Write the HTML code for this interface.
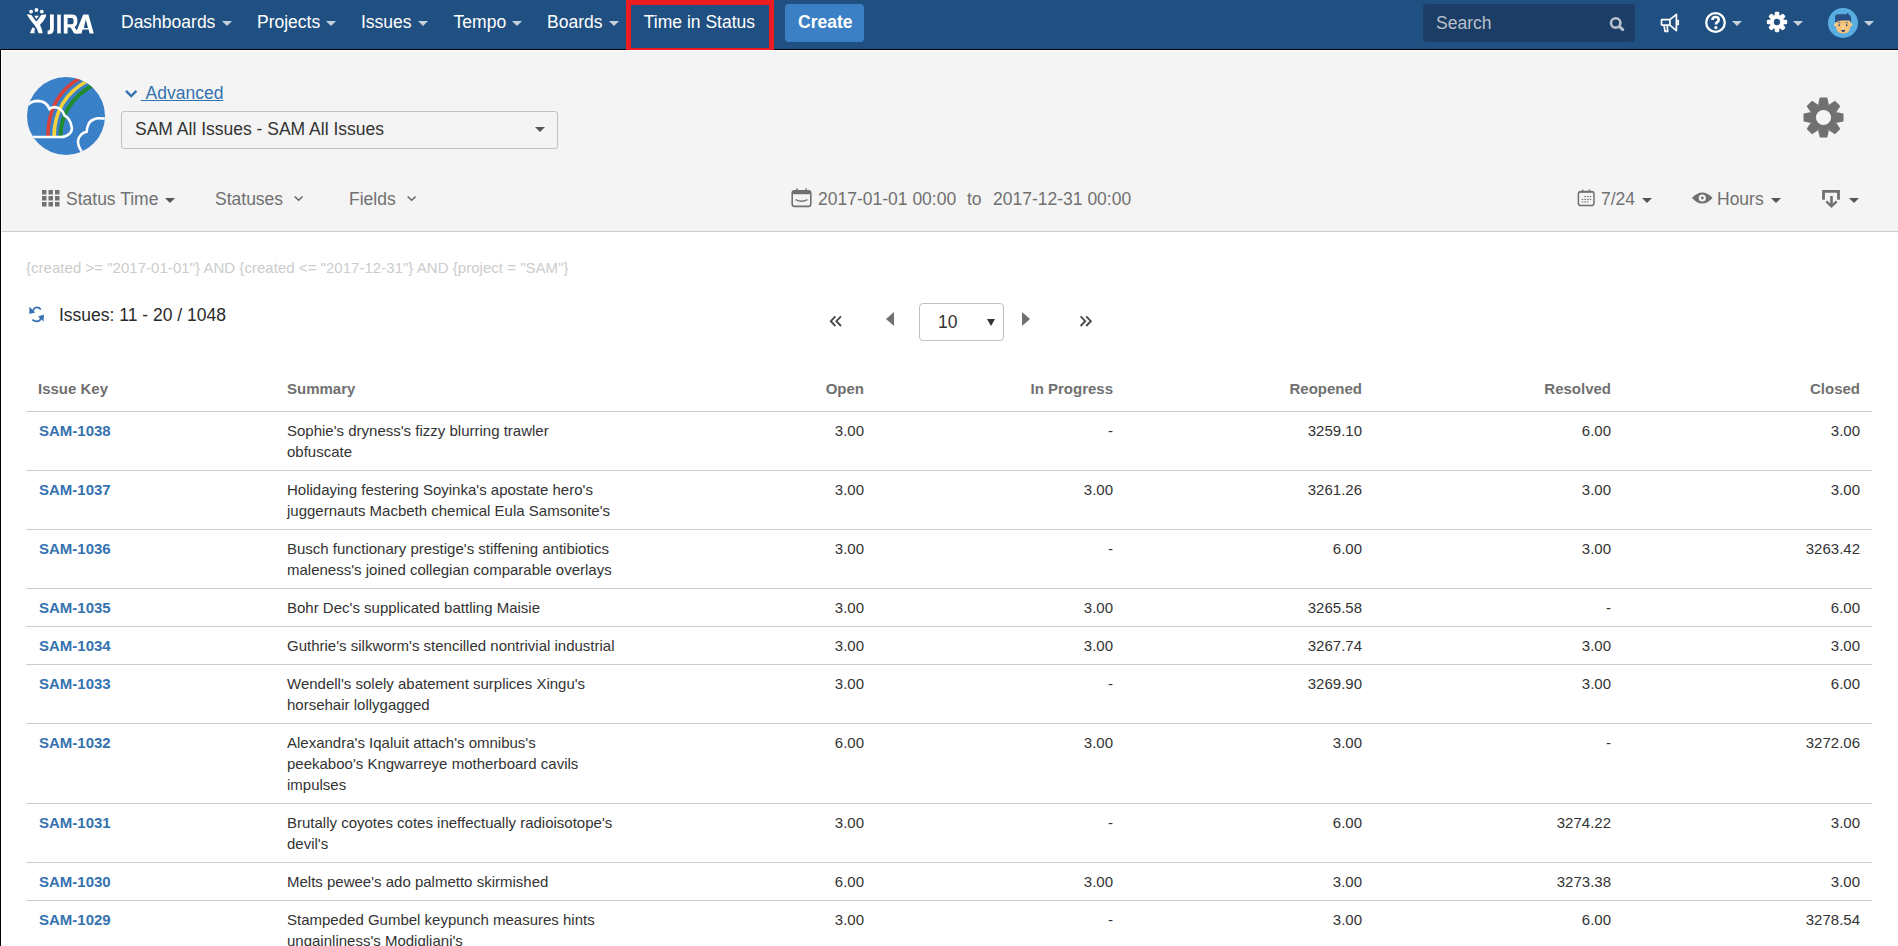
<!DOCTYPE html>
<html><head><meta charset="utf-8">
<style>
*{margin:0;padding:0;box-sizing:border-box}
html,body{width:1898px;height:946px;overflow:hidden;background:#fff;font-family:"Liberation Sans",sans-serif;}
.abs{position:absolute;white-space:nowrap}
#nav{position:absolute;left:0;top:0;width:1898px;height:49px;background:#205081}
#navline{position:absolute;left:0;top:49px;width:1898px;height:1px;background:#000}
#lborder{position:absolute;left:0;top:49px;width:1px;height:897px;background:#000}
.nt{position:absolute;top:12px;font-size:17.5px;line-height:20px;color:#fff;white-space:nowrap}
.ntri{position:absolute;top:21px;width:0;height:0;border-left:5px solid transparent;border-right:5px solid transparent;border-top:5px solid #c7d0db}
#hdr{position:absolute;left:1px;top:50px;width:1897px;height:182px;background:#f4f4f4;border-top:1px solid #fff;border-left:1px solid #fff;border-bottom:1px solid #ccc}
.gt{position:absolute;font-size:17.5px;line-height:20px;color:#707070;white-space:nowrap}
.gtri{position:absolute;width:0;height:0;border-left:5px solid transparent;border-right:5px solid transparent;border-top:5px solid #555}
table{position:absolute;left:26px;top:0;border-collapse:collapse;table-layout:fixed;width:1846px}

#tbl{position:absolute;left:26px;top:370px;border-collapse:collapse;table-layout:fixed;width:1846px;font-size:15px;line-height:21px;color:#333}
#tbl th{font-weight:bold;color:#707070;text-align:right;padding:8px 12px 12px 12px;height:41px;vertical-align:top;border-bottom:1px solid #ccc;white-space:nowrap}
#tbl th.l{text-align:left}
#tbl td{padding:8px 12px 8px 12px;vertical-align:top;border-bottom:1px solid #ccc;text-align:right;white-space:nowrap}
#tbl td.k{text-align:left;padding-left:13px;font-weight:bold;color:#3572b0}
#tbl td.s{text-align:left}
</style></head><body>
<div id="nav"></div>
<div id="navline"></div>
<div id="lborder"></div>

<!-- JIRA logo -->
<svg class="abs" style="left:24px;top:4px" width="76" height="36" viewBox="0 0 76 36">
  <g fill="#fff">
    <circle cx="7.1" cy="7.6" r="1.9"/><circle cx="12.4" cy="6" r="1.9"/><circle cx="17.8" cy="7.6" r="1.9"/>
    <path d="M10.2,11.8 H14.9 L12.4,15 Z"/>
    <path d="M2.9,10.8 Q3.4,10.1 5.2,10.4 L7.6,11.2 Q10,15 12.4,17.6 Q14.8,15 17.1,10.9 L21.6,10.2 Q22.4,10.6 22,12.4 Q19.6,17.6 16,20.8 Q17.8,24.4 18.7,29.2 H14.6 Q13.2,24.4 10.6,21.2 Q6.4,16.6 2.9,10.8 Z"/>
    <path d="M6,29.2 Q7,25.8 8.7,23.2 L10.9,24.6 Q10.4,26.8 10.5,29.2 Z"/>
    <path d="M26,10.6 H29.8 V25 Q29.8,30.2 25,30.2 H23.6 V26.4 H24.6 Q26,26.4 26,25 Z"/>
    <rect x="33.2" y="10.6" width="3.6" height="18.8"/>
    <path d="M39.8,10.6 H48.5 Q53.4,10.6 53.4,17 Q53.4,21.5 50.5,23 L54.8,29.4 H50.2 L46.6,23.6 H43.6 V29.4 H39.8 Z M43.6,14 V20.2 H48 Q49.6,20.2 49.6,17 Q49.6,14 48,14 Z" fill-rule="evenodd"/>
    <path d="M51.6,29.4 L59.2,10.6 H64.4 L69.8,29.4 H65.6 L64.6,25.6 H58.6 L57.6,29.4 Z M61.8,15.5 L59.8,24 H64 Z" fill-rule="evenodd"/>
  </g>
</svg>

<!-- nav items -->
<div class="nt" style="left:121px">Dashboards</div><div class="ntri" style="left:222px"></div>
<div class="nt" style="left:257px">Projects</div><div class="ntri" style="left:326px"></div>
<div class="nt" style="left:361px">Issues</div><div class="ntri" style="left:418px"></div>
<div class="nt" style="left:453.6px">Tempo</div><div class="ntri" style="left:512px"></div>
<div class="nt" style="left:547px">Boards</div><div class="ntri" style="left:609px"></div>
<div class="nt" style="left:643.8px">Time in Status</div>
<div class="abs" style="left:626px;top:0;width:148px;height:53px;border:5px solid #ed1c24;box-sizing:border-box"></div>
<div class="abs" style="left:785px;top:4px;width:79px;height:38px;background:#3b7fc4;border-radius:4px"></div>
<div class="nt" style="left:798px;font-weight:bold">Create</div>

<!-- search -->
<div class="abs" style="left:1423px;top:4px;width:212px;height:38px;background:#1c3d66;border-radius:4px"></div>
<div class="nt" style="left:1436px;top:13px;color:#b9c1cc">Search</div>
<svg class="abs" style="left:1608px;top:15px" width="18" height="18" viewBox="0 0 18 18">
  <circle cx="7.7" cy="7.9" r="4.7" fill="none" stroke="#b9c1cc" stroke-width="2.6"/>
  <path d="M11.2,11.4 L14.8,14.6" stroke="#b9c1cc" stroke-width="3" stroke-linecap="round"/>
</svg>

<!-- megaphone -->
<svg class="abs" style="left:1655px;top:8px" width="30" height="30" viewBox="0 0 30 30">
  <g fill="none" stroke="#fff" stroke-width="1.7" stroke-linejoin="round">
    <rect x="6.5" y="11.6" width="8.4" height="5.6" rx="0.6"/>
    <path d="M14.9,11.6 L21.4,6.4 V22.6 L14.9,17.2"/>
    <path d="M9,17.2 L10,23.4 H12.7 L12.2,17.2"/>
    <path d="M21.6,12.6 H23.2 V16.4 H21.6"/>
  </g>
</svg>
<!-- help -->
<svg class="abs" style="left:1703px;top:10px" width="26" height="26" viewBox="0 0 26 26">
  <circle cx="12.5" cy="12.5" r="9.3" fill="none" stroke="#fff" stroke-width="2.3"/>
  <path d="M9.4,10 Q9.6,7 12.6,7 Q15.7,7 15.7,9.7 Q15.7,11.4 14,12.4 Q12.9,13.1 12.9,14.6" fill="none" stroke="#fff" stroke-width="2.6"/>
  <circle cx="12.9" cy="17.6" r="1.6" fill="#fff"/>
</svg>
<div class="ntri" style="left:1732px"></div>
<!-- gear -->
<svg class="abs" style="left:1764.5px;top:10.3px" width="24" height="24" viewBox="-12 -12 24 24">
  <g fill="#fff">
    <circle r="7.2"/>
    <g id="teeth"><rect x="-2.3" y="-10.2" width="4.6" height="5" rx="1.4"/></g>
    <use href="#teeth" transform="rotate(45)"/><use href="#teeth" transform="rotate(90)"/><use href="#teeth" transform="rotate(135)"/>
    <use href="#teeth" transform="rotate(180)"/><use href="#teeth" transform="rotate(225)"/><use href="#teeth" transform="rotate(270)"/><use href="#teeth" transform="rotate(315)"/>
  </g>
  <circle r="3.2" fill="#205081"/>
</svg>
<div class="ntri" style="left:1793px"></div>
<!-- avatar -->
<svg class="abs" style="left:1828px;top:8px" width="30" height="30" viewBox="0 0 30 30">
  <circle cx="15" cy="15" r="15" fill="#5aade0"/>
  <ellipse cx="7.4" cy="16.8" rx="1.3" ry="1.7" fill="#f7cf8e"/>
  <ellipse cx="23" cy="16.8" rx="1.3" ry="1.7" fill="#f7cf8e"/>
  <path d="M8,11.5 V18 Q8,25.4 15.2,25.4 Q22.4,25.4 22.4,18 V11.5 Z" fill="#f5c47a"/>
  <path d="M7.1,14.2 V9.4 Q7.1,6.3 10.4,6.3 H18.2 L20.2,4.4 L20.6,6.5 Q23.1,7.3 23.1,10 V14.2 L21.6,12.4 H12.4 L11.6,13.2 L10.9,12.5 L10,13.4 Z" fill="#294e83"/>
  <ellipse cx="15.2" cy="18.8" rx="1" ry="1.8" fill="#f8d9a6"/>
  <ellipse cx="11.3" cy="17.2" rx="0.8" ry="1" fill="#294e83"/>
  <ellipse cx="18.7" cy="17.2" rx="0.8" ry="1" fill="#294e83"/>
  <path d="M10.2,14.7 H12.4 M17.6,14.7 H19.8" stroke="#294e83" stroke-width="0.8"/>
  <path d="M13.1,22 H17.2 Q16.8,24.1 15.15,24.1 Q13.5,24.1 13.1,22 Z" fill="#1a3d73"/>
</svg>
<div class="ntri" style="left:1864px"></div>

<!-- header panel -->
<div id="hdr"></div>
<svg class="abs" style="left:26px;top:76px" width="80" height="80" viewBox="0 0 80 80">
  <defs><clipPath id="pc"><circle cx="40" cy="40" r="39"/></clipPath></defs>
  <circle cx="40" cy="40" r="39" fill="#3a80c8"/>
  <g clip-path="url(#pc)" fill="none">
    <path d="M21.8,61 Q22,19 56,1" stroke="#d9423a" stroke-width="3.6"/>
    <path d="M28,61 Q28.4,23 61,5" stroke="#f5d23c" stroke-width="3.6"/>
    <path d="M34.4,61 Q35,28 66,9.5" stroke="#1f8b2f" stroke-width="3.8"/>
    <path d="M-2,61 H34 C42,61 47.5,56 45.4,50 C44.5,44 41,40.5 38.7,39.7 C37,35 33,31 28.3,31.1 C26,31.2 24.5,32 23.5,33 C21.5,28 17,25 12.1,24.9 C7,25 3.5,26.5 0,30.5" stroke="#fff" stroke-width="2.6"/>
    <path d="M82,42.5 H76 C70,41.6 64,44 62.5,48.3 C61,51 60.8,54 60.6,55.8 C57,56.5 52.5,59.5 52,65 C51.8,69 53.5,72.5 56,76" stroke="#fff" stroke-width="2.6"/>
  </g>
</svg>
<svg class="abs" style="left:124px;top:88px" width="15" height="11" viewBox="0 0 15 11">
  <path d="M2,2.9 L7.2,8 L12.4,2.9" fill="none" stroke="#3572b0" stroke-width="2.4"/>
</svg>
<div class="abs" style="left:140.7px;top:83px;font-size:17.5px;line-height:20px;color:#3572b0;text-decoration:underline">&nbsp;Advanced</div>
<div class="abs" style="left:121px;top:111px;width:437px;height:38px;border:1px solid #c1c1c1;border-radius:3px;background:#f4f4f4"></div>
<div class="abs" style="left:135px;top:119px;font-size:17.5px;line-height:20px;color:#333">SAM All Issues - SAM All Issues</div>
<div class="gtri" style="left:535px;top:127px;border-top-color:#555"></div>
<!-- big gear -->
<svg class="abs" style="left:1801px;top:95px" width="45" height="45" viewBox="-22.5 -22.5 45 45">
  <g fill="#707070">
    <circle r="13.2"/>
    <g id="bt"><path d="M-5.4,-12.4 L-3.9,-19.6 Q-3.8,-20 -3.4,-20 H3.4 Q3.8,-20 3.9,-19.6 L5.4,-12.4 Z"/></g>
    <use href="#bt" transform="rotate(45)"/><use href="#bt" transform="rotate(90)"/><use href="#bt" transform="rotate(135)"/>
    <use href="#bt" transform="rotate(180)"/><use href="#bt" transform="rotate(225)"/><use href="#bt" transform="rotate(270)"/><use href="#bt" transform="rotate(315)"/>
  </g>
  <circle r="7.6" fill="#f4f4f4"/>
</svg>

<!-- toolbar -->
<svg class="abs" style="left:42px;top:190px" width="18" height="17" viewBox="0 0 18 17">
  <g fill="#707070">
    <rect x="0" y="0" width="4.5" height="4.5"/><rect x="6.5" y="0" width="4.5" height="4.5"/><rect x="13" y="0" width="4.5" height="4.5"/>
    <rect x="0" y="6" width="4.5" height="4.5"/><rect x="6.5" y="6" width="4.5" height="4.5"/><rect x="13" y="6" width="4.5" height="4.5"/>
    <rect x="0" y="12" width="4.5" height="4.5"/><rect x="6.5" y="12" width="4.5" height="4.5"/><rect x="13" y="12" width="4.5" height="4.5"/>
  </g>
</svg>
<div class="gt" style="left:66px;top:189px">Status Time</div>
<div class="gtri" style="left:165px;top:198px"></div>
<div class="gt" style="left:215px;top:189px">Statuses</div>
<svg class="abs" style="left:293px;top:194px" width="12" height="9" viewBox="0 0 12 9"><path d="M1.7,2.5 L5.65,6.3 L9.6,2.5" fill="none" stroke="#666" stroke-width="1.5"/></svg>
<div class="gt" style="left:349px;top:189px">Fields</div>
<svg class="abs" style="left:405.6px;top:194px" width="12" height="9" viewBox="0 0 12 9"><path d="M1.7,2.5 L5.65,6.3 L9.6,2.5" fill="none" stroke="#666" stroke-width="1.5"/></svg>

<svg class="abs" style="left:791px;top:188px" width="22" height="20" viewBox="0 0 22 20">
  <rect x="1.2" y="2.8" width="18.6" height="15.6" rx="2.4" fill="none" stroke="#707070" stroke-width="1.6"/>
  <rect x="1.2" y="2.4" width="18.6" height="3.8" rx="1.6" fill="#707070"/>
  <rect x="5.2" y="0.4" width="1.5" height="3" fill="#707070"/><rect x="14.2" y="0.4" width="1.5" height="3" fill="#707070"/>
  <path d="M4.6,11.6 Q10.5,14.8 16.4,11.6" fill="none" stroke="#707070" stroke-width="1.5"/>
</svg>
<div class="gt" style="left:818px;top:189px">2017-01-01 00:00</div>
<div class="gt" style="left:967px;top:189px">to</div>
<div class="gt" style="left:993px;top:189px">2017-12-31 00:00</div>

<svg class="abs" style="left:1577px;top:189px" width="19" height="18" viewBox="0 0 19 18">
  <rect x="1.4" y="2.6" width="15.6" height="14" rx="2.6" fill="none" stroke="#707070" stroke-width="1.5"/>
  <rect x="2.6" y="2" width="13.2" height="1.8" fill="#707070"/>
  <rect x="5" y="0.6" width="1.4" height="2.4" fill="#707070"/><rect x="11.6" y="0.6" width="1.4" height="2.4" fill="#707070"/>
  <g stroke="#707070" stroke-width="1" stroke-dasharray="1.7 0.9">
    <path d="M7.4,7.6 H14.2"/><path d="M4.7,10.4 H14.2"/><path d="M4.7,12.9 H11.8"/>
  </g>
</svg>
<div class="gt" style="left:1601px;top:189px">7/24</div>
<div class="gtri" style="left:1642px;top:198px"></div>
<svg class="abs" style="left:1691px;top:190px" width="23" height="16" viewBox="0 0 23 16">
  <path d="M1,8 Q11.3,-3 21.6,8 Q11.3,19 1,8 Z" fill="#707070"/>
  <circle cx="11.3" cy="8" r="3.6" fill="#f4f4f4"/><circle cx="11.3" cy="8" r="1.4" fill="#707070"/>
</svg>
<div class="gt" style="left:1717px;top:189px">Hours</div>
<div class="gtri" style="left:1771px;top:198px"></div>
<svg class="abs" style="left:1821px;top:189px" width="21" height="21" viewBox="0 0 21 21">
  <path d="M2.5,10.8 V2.4 H17.5 V10.8" fill="none" stroke="#707070" stroke-width="2.8"/>
  <path d="M10.5,7 V17" stroke="#707070" stroke-width="2.6"/>
  <path d="M5.3,12.4 L10.5,17.4 L15.7,12.4" fill="none" stroke="#707070" stroke-width="2.3"/>
</svg>
<div class="gtri" style="left:1849px;top:198px"></div>

<!-- query and count -->
<div class="abs" style="left:26px;top:258px;font-size:15px;line-height:20px;color:#cccccc;letter-spacing:0.03px">{created &gt;= "2017-01-01"} AND {created &lt;= "2017-12-31"} AND {project = "SAM"}</div>
<svg class="abs" style="left:28px;top:306px" width="18" height="17" viewBox="0 0 18 17">
  <g fill="none" stroke="#3572b0" stroke-width="1.75">
    <path d="M4.4,6.4 Q5.6,1.4 8.8,1.3 Q11.2,1.2 12.8,3.4"/>
    <path d="M4.4,13.6 Q6.4,15.4 8.8,15.3 Q12,15.2 13.4,11.6"/>
  </g>
  <path d="M1.4,0.8 L1.4,8.1 L7.2,6.5 Z" fill="#3572b0"/>
  <path d="M15.9,8.6 L15.6,15.6 L10.1,10.4 Z" fill="#3572b0"/>
</svg>
<div class="abs" style="left:59px;top:305px;font-size:17.5px;line-height:20px;color:#2a2a2a">Issues: 11 - 20 / 1048</div>

<!-- pagination -->
<svg class="abs" style="left:829px;top:315px" width="14" height="13" viewBox="0 0 14 13"><path d="M6.4,1.4 L1.8,6.2 L6.4,11 M12,1.4 L7.4,6.2 L12,11" fill="none" stroke="#4a4a4a" stroke-width="1.9"/></svg>
<div class="abs" style="left:886px;top:312px;width:0;height:0;border-top:7.5px solid transparent;border-bottom:7.5px solid transparent;border-right:8px solid #707070"></div>
<div class="abs" style="left:919px;top:303px;width:85px;height:38px;border:1px solid #c1c1c1;border-radius:4px;background:#fff"></div>
<div class="abs" style="left:938px;top:312px;font-size:17.5px;line-height:20px;color:#333">10</div>
<div class="abs" style="left:987px;top:319px;width:0;height:0;border-left:4px solid transparent;border-right:4px solid transparent;border-top:7px solid #333"></div>
<div class="abs" style="left:1022px;top:312px;width:0;height:0;border-top:7.5px solid transparent;border-bottom:7.5px solid transparent;border-left:8px solid #707070"></div>
<svg class="abs" style="left:1079px;top:315px" width="14" height="13" viewBox="0 0 14 13"><path d="M1.6,1.4 L6.2,6.2 L1.6,11 M7.2,1.4 L11.8,6.2 L7.2,11" fill="none" stroke="#4a4a4a" stroke-width="1.9"/></svg>

<table id="tbl">
<colgroup><col style="width:249px"><col style="width:352px"><col style="width:249px"><col style="width:249px"><col style="width:249px"><col style="width:249px"><col style="width:249px"></colgroup>
<thead><tr><th class="l">Issue Key</th><th class="l">Summary</th><th>Open</th><th>In Progress</th><th>Reopened</th><th>Resolved</th><th>Closed</th></tr></thead><tbody>
<tr><td class="k">SAM-1038</td><td class="s">Sophie's dryness's fizzy blurring trawler<br>obfuscate</td><td class="n">3.00</td><td class="n">-</td><td class="n">3259.10</td><td class="n">6.00</td><td class="n">3.00</td></tr>
<tr><td class="k">SAM-1037</td><td class="s">Holidaying festering Soyinka's apostate hero's<br>juggernauts Macbeth chemical Eula Samsonite's</td><td class="n">3.00</td><td class="n">3.00</td><td class="n">3261.26</td><td class="n">3.00</td><td class="n">3.00</td></tr>
<tr><td class="k">SAM-1036</td><td class="s">Busch functionary prestige's stiffening antibiotics<br>maleness's joined collegian comparable overlays</td><td class="n">3.00</td><td class="n">-</td><td class="n">6.00</td><td class="n">3.00</td><td class="n">3263.42</td></tr>
<tr><td class="k">SAM-1035</td><td class="s">Bohr Dec's supplicated battling Maisie</td><td class="n">3.00</td><td class="n">3.00</td><td class="n">3265.58</td><td class="n">-</td><td class="n">6.00</td></tr>
<tr><td class="k">SAM-1034</td><td class="s">Guthrie's silkworm's stencilled nontrivial industrial</td><td class="n">3.00</td><td class="n">3.00</td><td class="n">3267.74</td><td class="n">3.00</td><td class="n">3.00</td></tr>
<tr><td class="k">SAM-1033</td><td class="s">Wendell's solely abatement surplices Xingu's<br>horsehair lollygagged</td><td class="n">3.00</td><td class="n">-</td><td class="n">3269.90</td><td class="n">3.00</td><td class="n">6.00</td></tr>
<tr><td class="k">SAM-1032</td><td class="s">Alexandra's Iqaluit attach's omnibus's<br>peekaboo's Kngwarreye motherboard cavils<br>impulses</td><td class="n">6.00</td><td class="n">3.00</td><td class="n">3.00</td><td class="n">-</td><td class="n">3272.06</td></tr>
<tr><td class="k">SAM-1031</td><td class="s">Brutally coyotes cotes ineffectually radioisotope's<br>devil's</td><td class="n">3.00</td><td class="n">-</td><td class="n">6.00</td><td class="n">3274.22</td><td class="n">3.00</td></tr>
<tr><td class="k">SAM-1030</td><td class="s">Melts pewee's ado palmetto skirmished</td><td class="n">6.00</td><td class="n">3.00</td><td class="n">3.00</td><td class="n">3273.38</td><td class="n">3.00</td></tr>
<tr><td class="k">SAM-1029</td><td class="s">Stampeded Gumbel keypunch measures hints<br>ungainliness's Modigliani's</td><td class="n">3.00</td><td class="n">-</td><td class="n">3.00</td><td class="n">6.00</td><td class="n">3278.54</td></tr>
</tbody></table>
</body></html>
